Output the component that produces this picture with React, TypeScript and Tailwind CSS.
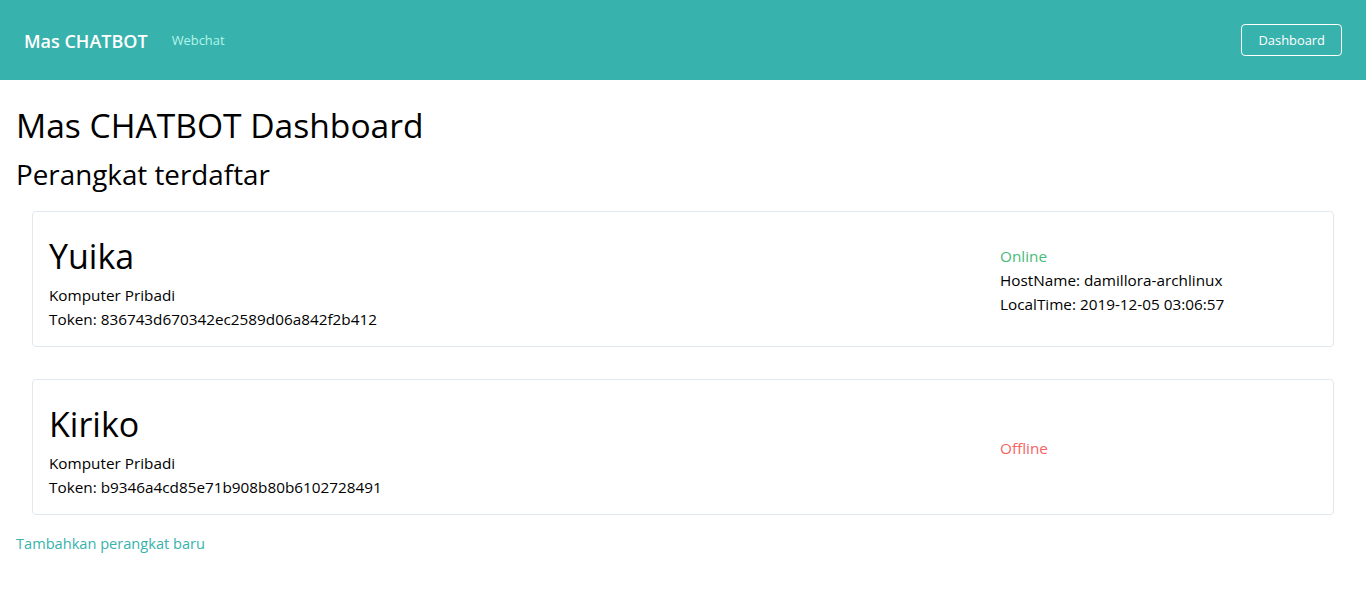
import React from "react";

const FONT = { fontFamily: '"Open Sans", "Noto Sans", sans-serif' };

type Device = {
  name: string;
  type: string;
  token: string;
  online: boolean;
  host?: string;
  time?: string;
};

const devices: Device[] = [
  {
    name: "Yuika",
    type: "Komputer Pribadi",
    token: "836743d670342ec2589d06a842f2b412",
    online: true,
    host: "damillora-archlinux",
    time: "2019-12-05 03:06:57",
  },
  {
    name: "Kiriko",
    type: "Komputer Pribadi",
    token: "b9346a4cd85e71b908b80b6102728491",
    online: false,
  },
];

function DeviceCard({ d }: { d: Device }) {
  return (
    <div className="mx-4 border border-[#e2e8f0] rounded bg-white px-4 pt-[17px] pb-[15px] flex items-center">
      <div className="w-3/4 min-w-0">
        <div className="text-[34px] leading-[54px] text-black">{d.name}</div>
        <div className="text-[15.3px] leading-6 text-black">{d.type}</div>
        <div className="text-[15.3px] leading-6 text-black">Token: {d.token}</div>
      </div>
      <div className="w-1/4 text-[15.3px] leading-6 text-black">
        {d.online ? (
          <>
            <div className="text-[#48bb78]">Online</div>
            <div>HostName: {d.host}</div>
            <div>LocalTime: {d.time}</div>
          </>
        ) : (
          <div className="text-[#f56565]">Offline</div>
        )}
      </div>
    </div>
  );
}

export default function App() {
  return (
    <div className="min-h-[612px] bg-white text-black" style={FONT}>
      <nav className="h-20 bg-[#38b2ac] px-6 flex items-center justify-between">
        <div className="flex items-center pt-[2px]">
          <span className="text-[18px] font-semibold text-white mr-6">Mas CHATBOT</span>
          <span className="text-[12.9px] text-[#b2f5ea]">Webchat</span>
        </div>
        <button className="h-8 px-4 pt-[2px] border border-white rounded text-[12.9px] text-white flex items-center">
          Dashboard
        </button>
      </nav>
      <main className="px-4 pt-[18px]">
        <h1 className="text-[33.6px] leading-[54px] text-black">Mas CHATBOT Dashboard</h1>
        <h2 className="text-[27.8px] leading-[45px] text-black">Perangkat terdaftar</h2>
        <div className="pt-[14px] flex flex-col gap-8">
          {devices.map((d) => (
            <DeviceCard key={d.name} d={d} />
          ))}
        </div>
        <div className="pt-4">
          <a href="#" className="text-[14.6px] leading-6 text-[#38b2ac]">
            Tambahkan perangkat baru
          </a>
        </div>
      </main>
    </div>
  );
}
